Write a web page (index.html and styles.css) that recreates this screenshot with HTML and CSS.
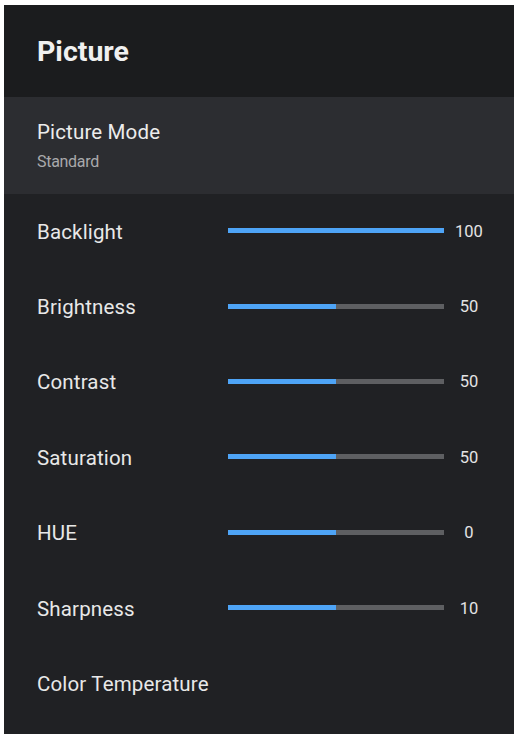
FILE: index.html
```html
<!DOCTYPE html>
<html>
<head>
<meta charset="utf-8">
<link rel="stylesheet" href="styles.css">
</head>
<body>
<div class="panel">
  <div class="header"><h1 class="title">Picture</h1></div>
  <div class="mode">
    <div class="mode-label">Picture Mode</div>
    <div class="mode-value">Standard</div>
  </div>
  <div class="row">
    <div class="label">Backlight</div>
    <div class="track"><div class="fill" style="width:100%"></div></div>
    <div class="value">100</div>
  </div>
  <div class="row">
    <div class="label">Brightness</div>
    <div class="track"><div class="fill" style="width:50%"></div></div>
    <div class="value">50</div>
  </div>
  <div class="row">
    <div class="label">Contrast</div>
    <div class="track"><div class="fill" style="width:50%"></div></div>
    <div class="value">50</div>
  </div>
  <div class="row">
    <div class="label">Saturation</div>
    <div class="track"><div class="fill" style="width:50%"></div></div>
    <div class="value">50</div>
  </div>
  <div class="row">
    <div class="label">HUE</div>
    <div class="track"><div class="fill" style="width:50%"></div></div>
    <div class="value">0</div>
  </div>
  <div class="row">
    <div class="label">Sharpness</div>
    <div class="track"><div class="fill" style="width:50%"></div></div>
    <div class="value">10</div>
  </div>
  <div class="row">
    <div class="label">Color Temperature</div>
  </div>
</div>
</body>
</html>
```

FILE: styles.css
```css
html, body {
  margin: 0;
  padding: 0;
  background: #ffffff;
}
body {
  font-family: Roboto, "Liberation Sans", sans-serif;
  color: #e6e6e6;
}
.panel {
  margin: 5px 0 0 4px;
  height: 729px;
  background: #202124;
  overflow: hidden;
}
.header {
  height: 92px;
  background: #1b1c1e;
  display: flex;
  align-items: center;
  padding-left: 33px;
}
.title {
  margin: 0;
  font-size: 28.5px;
  font-weight: 700;
  line-height: 33px;
  color: #f0f0f0;
}
.mode {
  height: 97px;
  box-sizing: border-box;
  background: #2c2d31;
  padding: 23px 0 0 33px;
}
.mode-label {
  font-size: 20.5px;
  line-height: 24px;
  letter-spacing: 0.15px;
  color: #ececec;
}
.mode-value {
  margin-top: 8px;
  font-size: 16px;
  line-height: 20px;
  letter-spacing: -0.3px;
  color: #a9a9ab;
}
.row {
  height: 75.4px;
  display: flex;
  align-items: center;
  padding-left: 33px;
}
.label {
  width: 191px;
  flex: none;
  font-size: 20.5px;
  line-height: 24px;
  letter-spacing: 0.15px;
  color: #e8e8e8;
  white-space: nowrap;
}
.track {
  width: 216px;
  height: 5px;
  flex: none;
  background: #5e5f62;
  margin-top: -2px;
}
.fill {
  height: 100%;
  background: #4ea4f6;
}
.value {
  width: 36px;
  margin-left: 7px;
  text-align: center;
  font-size: 16.5px;
  line-height: 20px;
  color: #e4e4e4;
}
```
